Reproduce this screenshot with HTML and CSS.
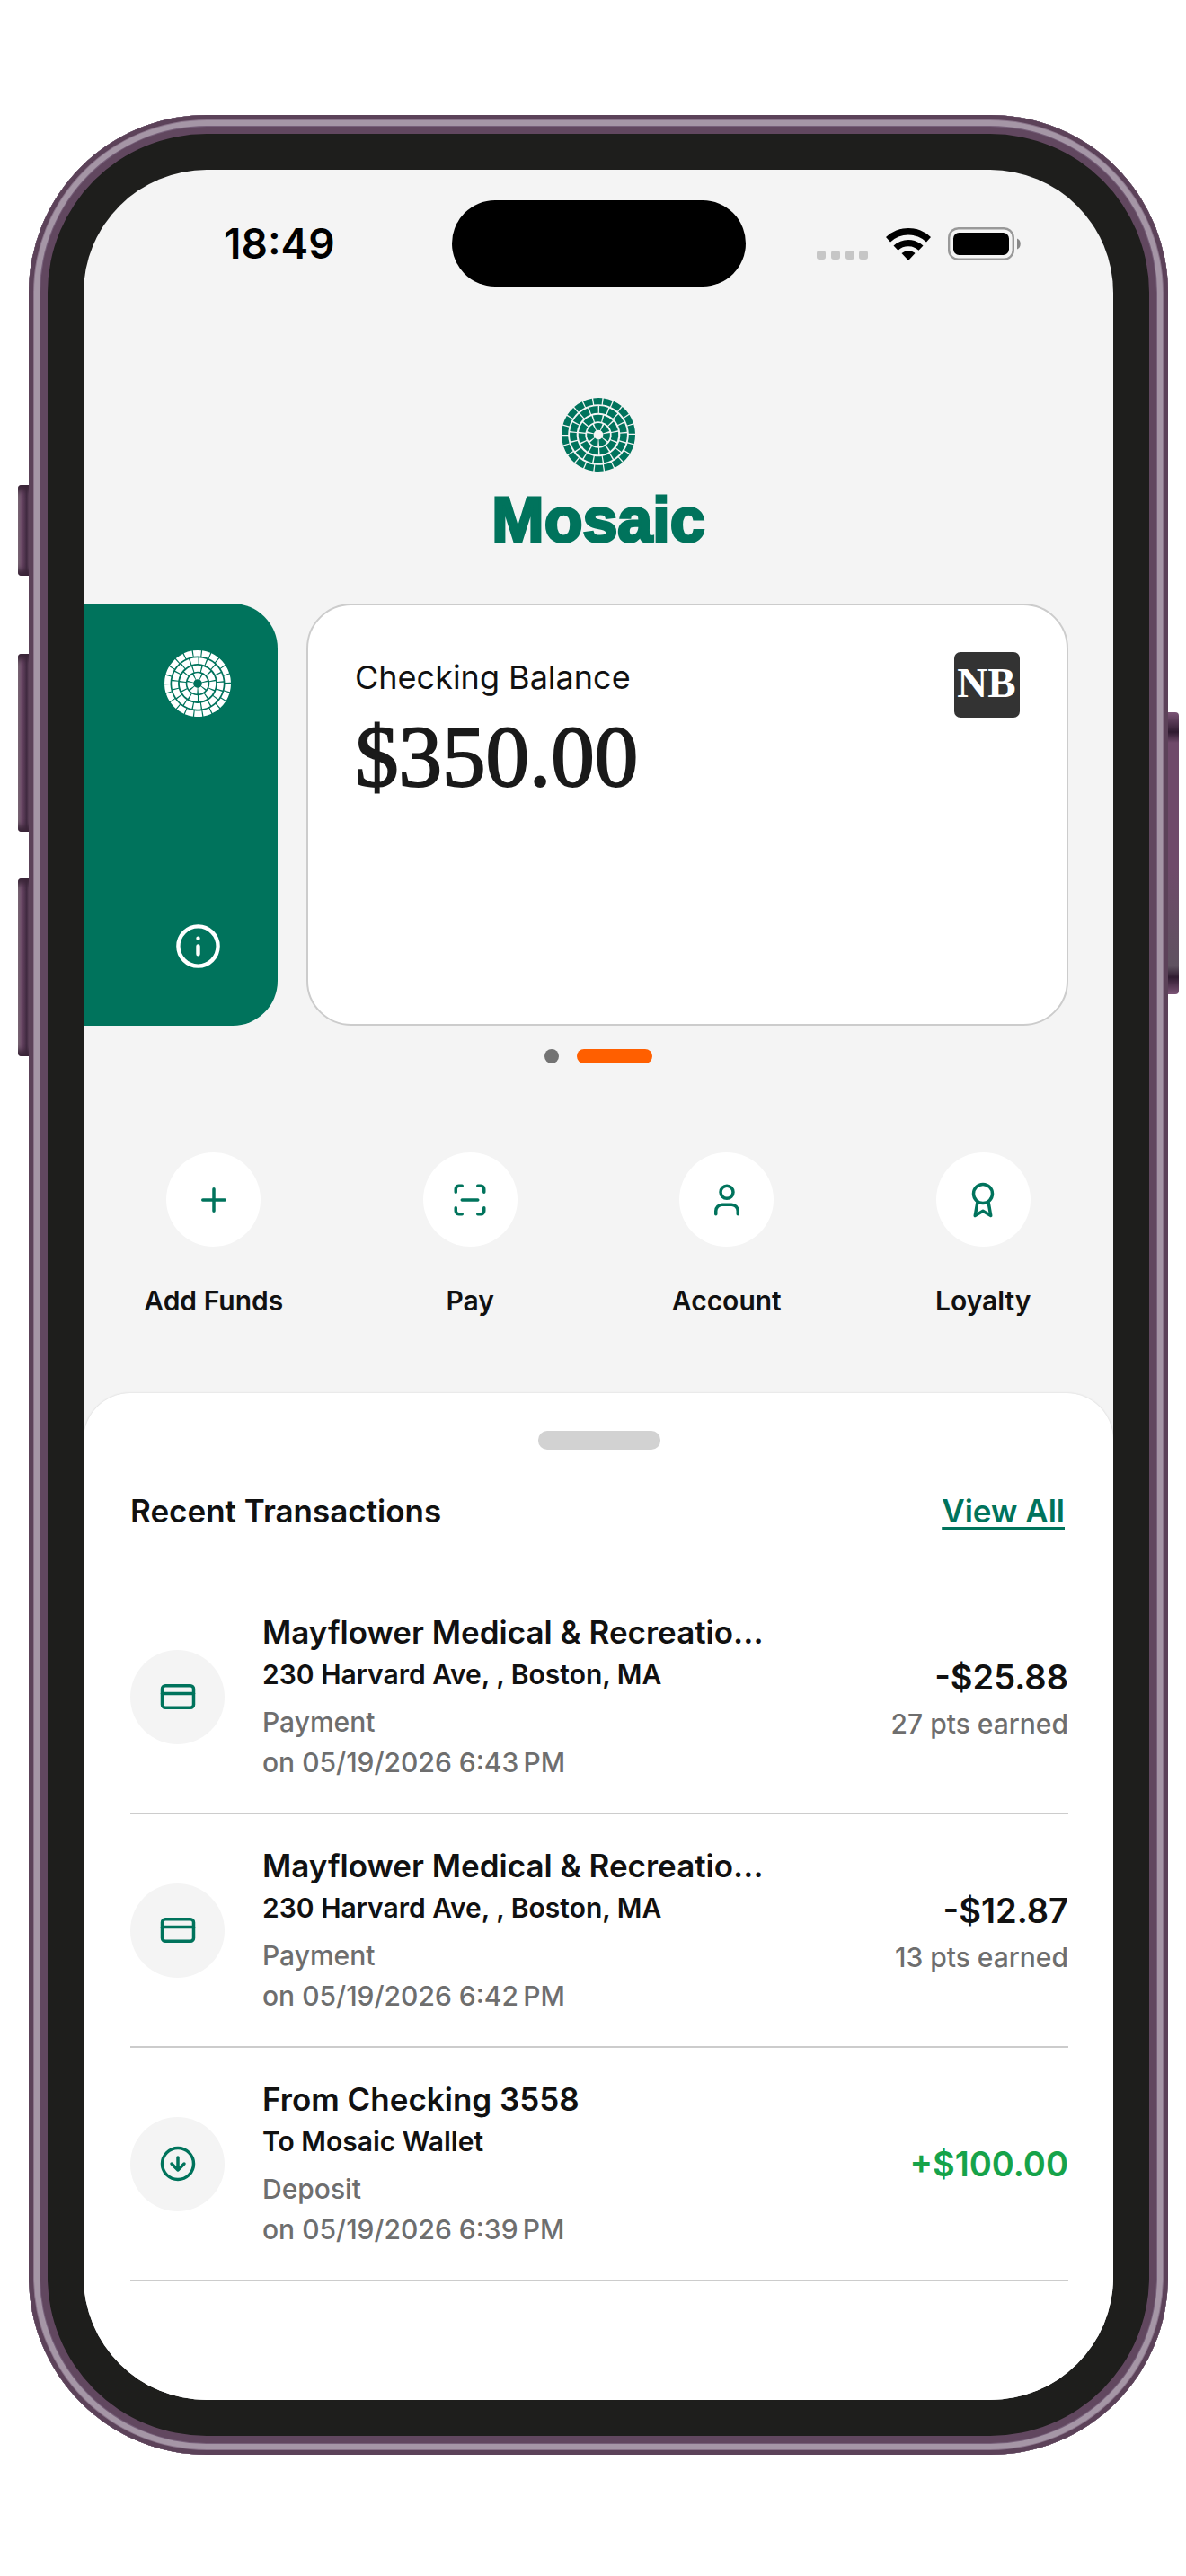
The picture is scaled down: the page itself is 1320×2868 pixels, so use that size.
FILE: index.html
```html
<!DOCTYPE html>
<html lang="en">
<head>
    <meta charset="UTF-8">
    <meta name="viewport" content="width=device-width, initial-scale=1.0">
    <title>Mosaic | Home</title>
    <link rel="stylesheet" href="styles.css">
</head>
<body>
    <!-- Shared shapes -->
    <svg class="sprite" aria-hidden="true">
        <symbol id="mosaic-mark" viewBox="0 0 82 82">
            <g fill="none" stroke="currentColor">
                <circle cx="41" cy="41" r="37.4" stroke-width="7.2" pathLength="22" stroke-dasharray=".88 .12"/>
                <circle cx="41" cy="41" r="28.1" stroke-width="7.6" pathLength="17" stroke-dasharray=".87 .13" transform="rotate(-88 41 41)"/>
                <circle cx="41" cy="41" r="18.5" stroke-width="7.6" pathLength="11" stroke-dasharray=".87 .13" transform="rotate(-106 41 41)"/>
                <circle cx="41" cy="41" r="9.1" stroke-width="7.6" pathLength="7" stroke-dasharray=".84 .16" transform="rotate(-112 41 41)"/>
            </g>
        </symbol>
        <symbol id="icon-card" viewBox="0 0 24 24">
            <rect x="2" y="5" width="20" height="14" rx="2"/>
            <path d="M2 10h20"/>
        </symbol>
        <symbol id="icon-deposit" viewBox="0 0 24 24">
            <circle cx="12" cy="12" r="10"/>
            <path d="M12 8v8M8 12l4 4 4-4"/>
        </symbol>
    </svg>

    <div class="phone">
        <span class="side-btn mute"></span>
        <span class="side-btn volume-up"></span>
        <span class="side-btn volume-down"></span>
        <span class="side-btn power"></span>

        <main class="screen">
            <div class="status-bar">
                <div class="time">18:49</div>
                <div class="island"></div>
                <div class="status-icons">
                    <svg class="signal" viewBox="0 0 58 37" fill="#c6c6c6">
                        <rect x="0" y="26" width="10" height="10" rx="3"/>
                        <rect x="16" y="26" width="10" height="10" rx="3"/>
                        <rect x="32" y="26" width="10" height="10" rx="3"/>
                        <rect x="47" y="26" width="10" height="10" rx="3"/>
                    </svg>
                    <svg class="wifi" viewBox="0 0 50 37">
                        <path d="M0 11a36 36 0 0 1 50 0l-5 5.500a29 29 0 0 0-40 0z"/>
                        <path d="M8.500 20.500a24 24 0 0 1 33 0l-5 5.300a17 17 0 0 0-23 0z"/>
                        <path d="M17.500 29a11.500 11.500 0 0 1 15 0L25 37z"/>
                    </svg>
                    <svg class="battery" viewBox="0 0 82 37">
                        <rect x="1.2" y="1.2" width="71.6" height="34.6" rx="10.5" fill="none" stroke="#999" stroke-width="2.4"/>
                        <rect x="6" y="6" width="62" height="25" rx="6.5"/>
                        <path d="M77 12.500c5 1.500 5 10.500 0 12z" fill="#888"/>
                    </svg>
                </div>
            </div>

            <header class="brand">
                <svg class="brand-mark"><use href="#mosaic-mark"/></svg>
                <h1>Mosaic</h1>
            </header>

            <section class="cards">
                <div class="card wallet-card">
                    <svg class="wallet-mark"><use href="#mosaic-mark"/></svg>
                    <button class="info-btn" aria-label="Wallet details">
                        <svg viewBox="0 0 24 24"><circle cx="12" cy="12" r="10"/><path d="M12 16v-4M12 8h.01"/></svg>
                    </button>
                </div>
                <div class="card balance-card">
                    <div>
                        <p class="balance-label">Checking Balance</p>
                        <p class="balance">$350.00</p>
                    </div>
                    <svg class="bank-logo" viewBox="0 0 73 73">
                        <rect width="73" height="73" rx="7"/>
                        <text x="36" y="50" text-anchor="middle">NB</text>
                    </svg>
                </div>
            </section>

            <div class="dots">
                <span class="dot"></span>
                <span class="dot active"></span>
            </div>

            <nav class="actions">
                <button class="action">
                    <span class="circle"><svg class="icon" viewBox="0 0 24 24"><path d="M5 12h14M12 5v14"/></svg></span>
                    Add Funds
                </button>
                <button class="action">
                    <span class="circle"><svg class="icon" viewBox="0 0 24 24"><path d="M3 7V5a2 2 0 0 1 2-2h2M17 3h2a2 2 0 0 1 2 2v2M21 17v2a2 2 0 0 1-2 2h-2M7 21H5a2 2 0 0 1-2-2v-2M7 12h10"/></svg></span>
                    Pay
                </button>
                <button class="action">
                    <span class="circle"><svg class="icon" viewBox="0 0 24 24"><path d="M19 21v-2a4 4 0 0 0-4-4H9a4 4 0 0 0-4 4v2"/><circle cx="12" cy="7" r="4"/></svg></span>
                    Account
                </button>
                <button class="action">
                    <span class="circle"><svg class="icon" viewBox="0 0 24 24"><circle cx="12" cy="8" r="6"/><path d="M15.500 13.500 17 22l-5-3-5 3 1.500-8.500"/></svg></span>
                    Loyalty
                </button>
            </nav>

            <section class="sheet">
                <div class="handle"></div>
                <div class="sheet-head">
                    <h2>Recent Transactions</h2>
                    <a href="#">View All</a>
                </div>

                <ul class="transactions">
                    <li class="transaction">
                        <span class="circle"><svg class="icon"><use href="#icon-card"/></svg></span>
                        <div class="details">
                            <h3>Mayflower Medical &amp; Recreatio...</h3>
                            <p class="place">230 Harvard Ave, , Boston, MA</p>
                            <p class="meta">Payment<br>on 05/19/2026 6:43&#8239;PM</p>
                        </div>
                        <div class="totals">
                            <p class="amount">-$25.88</p>
                            <p class="meta">27 pts earned</p>
                        </div>
                    </li>
                    <li class="transaction">
                        <span class="circle"><svg class="icon"><use href="#icon-card"/></svg></span>
                        <div class="details">
                            <h3>Mayflower Medical &amp; Recreatio...</h3>
                            <p class="place">230 Harvard Ave, , Boston, MA</p>
                            <p class="meta">Payment<br>on 05/19/2026 6:42&#8239;PM</p>
                        </div>
                        <div class="totals">
                            <p class="amount">-$12.87</p>
                            <p class="meta">13 pts earned</p>
                        </div>
                    </li>
                    <li class="transaction">
                        <span class="circle"><svg class="icon"><use href="#icon-deposit"/></svg></span>
                        <div class="details">
                            <h3>From Checking 3558</h3>
                            <p class="place">To Mosaic Wallet</p>
                            <p class="meta">Deposit<br>on 05/19/2026 6:39&#8239;PM</p>
                        </div>
                        <div class="totals">
                            <p class="amount credit">+$100.00</p>
                        </div>
                    </li>
                </ul>
            </section>
        </main>
    </div>
</body>
</html>
```
FILE: styles.css
```css
* {
    margin: 0;
    padding: 0;
    box-sizing: border-box;
}

body {
    background: #fff;
    color: #111;
    font-family: Inter, 'Liberation Sans', sans-serif;
    padding: 128px 20px 135px 32px;
}

button {
    border: none;
    background: none;
    font: inherit;
    color: inherit;
    cursor: pointer;
}

.sprite {
    display: none;
}

/* Phone frame */
.phone {
    position: relative;
    padding: 61px;
    border-radius: 198px;
    background: #1e1e1c;
    box-shadow: inset 0 0 0 5px #5c4259, inset 0 0 0 6px #8a748a, inset 0 0 0 12px #a596a6, inset 0 0 0 13px #77607a, inset 0 0 0 21px #61475f;
}

.side-btn {
    position: absolute;
    left: -12px;
    width: 12px;
    border-radius: 4px 0 0 4px;
    background: linear-gradient(90deg, #7a6a75, #6b4766 35%, #402a40 80%, #5c4259);
    box-shadow: inset 0 12px 6px -6px #3a2538, inset 0 -12px 6px -6px #3a2538;
}

.mute {
    top: 412px;
    height: 101px;
}

.volume-up {
    top: 600px;
    height: 198px;
}

.volume-down {
    top: 850px;
    height: 198px;
}

.power {
    top: 665px;
    left: auto;
    right: -12px;
    height: 314px;
    border-radius: 0 4px 4px 0;
    background: linear-gradient(180deg, #7b5576 0, #2f1b30 22px, #6f4a6a 34px, #6f4a6a 55%, #5f5260 90%, #2f1b30 295px, #7b5576);
    box-shadow: none;
}

.screen {
    overflow: hidden;
    border-radius: 137px;
    background: #f4f4f4;
}

/* Status bar */
.status-bar {
    display: grid;
    grid-template-columns: 1fr auto 1fr;
    align-items: center;
    padding-top: 34px;
}

.time {
    padding-left: 156px;
    font-size: 46px;
    font-weight: 600;
    color: #000;
}

.island {
    width: 327px;
    height: 96px;
    border-radius: 48px;
    background: #000;
}

.status-icons {
    display: flex;
    justify-content: flex-end;
    gap: 19px;
    padding-right: 102px;
}

.status-icons svg {
    height: 37px;
}

.signal {
    width: 58px;
}

.wifi {
    width: 50px;
}

.battery {
    width: 82px;
}

/* Brand */
.brand {
    display: flex;
    flex-direction: column;
    align-items: center;
    gap: 18px;
    margin: 124px 0 57px;
    color: #00735c;
}

.brand-mark {
    width: 82px;
    height: 82px;
}

.brand h1 {
    font-family: 'Liberation Sans', Arial, sans-serif;
    font-size: 70px;
    line-height: 72px;
    -webkit-text-stroke: 3px #00735c;
}

/* Cards */
.cards {
    display: flex;
    justify-content: flex-end;
    gap: 32px;
    padding-right: 50px;
}

.card {
    flex: none;
    display: flex;
    justify-content: space-between;
    width: calc(100% - 248px);
    height: 470px;
    padding: 52px;
    border-radius: 50px;
}

.wallet-card {
    flex-direction: column;
    align-items: flex-end;
    background: #00735c;
    color: #fff;
}

.wallet-mark,
.info-btn {
    width: 74px;
    height: 74px;
}

.info-btn svg {
    width: 53px;
    height: 53px;
    fill: none;
    stroke: currentColor;
    stroke-width: 2;
    stroke-linecap: round;
    vertical-align: middle;
}

.balance-card {
    border: 2px solid #ccc;
    background: #fff;
}

.balance-label {
    margin: 4px 0 16px;
    font-size: 36px;
    line-height: 48px;
}

.balance {
    font-family: 'Liberation Serif', 'Times New Roman', serif;
    font-size: 97px;
    line-height: 98px;
    color: #1a1a1a;
    -webkit-text-stroke: 2px #1a1a1a;
}

.bank-logo {
    width: 73px;
    height: 73px;
    fill: #333;
}

.bank-logo text {
    fill: #fff;
    font-family: 'Liberation Serif', 'Times New Roman', serif;
    font-size: 47px;
    font-weight: 700;
}

/* Pager */
.dots {
    display: flex;
    justify-content: center;
    gap: 20px;
    padding-top: 26px;
}

.dot {
    width: 16px;
    height: 16px;
    border-radius: 8px;
    background: #737373;
}

.dot.active {
    width: 84px;
    background: #ff5f00;
}

/* Quick actions */
.actions {
    display: grid;
    grid-template-columns: repeat(4, 1fr);
    padding: 99px 2px 85px;
}

.action {
    display: flex;
    flex-direction: column;
    align-items: center;
    gap: 42px;
    font-size: 30px;
    font-weight: 600;
    line-height: 36px;
}

.circle {
    flex: none;
    display: flex;
    align-items: center;
    justify-content: center;
    width: 105px;
    height: 105px;
    border-radius: 50%;
    background: #fff;
}

.icon {
    width: 42px;
    height: 42px;
    fill: none;
    stroke: #00735c;
    stroke-width: 2;
    stroke-linecap: round;
    stroke-linejoin: round;
}

/* Transactions sheet */
.sheet {
    padding: 42px 50px 132px 52px;
    border-radius: 52px 52px 0 0;
    background: #fff;
    box-shadow: 0 0 2px #ccc;
}

.handle {
    width: 136px;
    height: 21px;
    margin: 0 auto 44px;
    border-radius: 10px;
    background: #d2d2d2;
}

.sheet-head {
    display: flex;
    justify-content: space-between;
    padding-right: 4px;
    margin-bottom: 54px;
    line-height: 48px;
}

.sheet-head h2,
.sheet-head a,
.details h3 {
    font-size: 35px;
    font-weight: 600;
}

.sheet-head a {
    color: #00735c;
    text-decoration-thickness: 3px;
    text-underline-offset: 5px;
}

.transactions {
    list-style: none;
}

.transaction {
    display: flex;
    align-items: center;
    gap: 42px;
    height: 260px;
    border-bottom: 2px solid #ccc;
}

.transaction .circle {
    background: #f4f4f4;
}

.details {
    flex: 1;
}

.details h3 {
    line-height: 48px;
}

.place {
    margin-bottom: 8px;
    font-size: 30px;
    font-weight: 600;
    line-height: 46px;
}

.meta {
    font-size: 30px;
    font-weight: 500;
    line-height: 45px;
    color: #6e6e6e;
}

.totals {
    text-align: right;
}

.amount {
    font-size: 38px;
    font-weight: 600;
    line-height: 60px;
}

.credit {
    color: #16a34a;
}
```
